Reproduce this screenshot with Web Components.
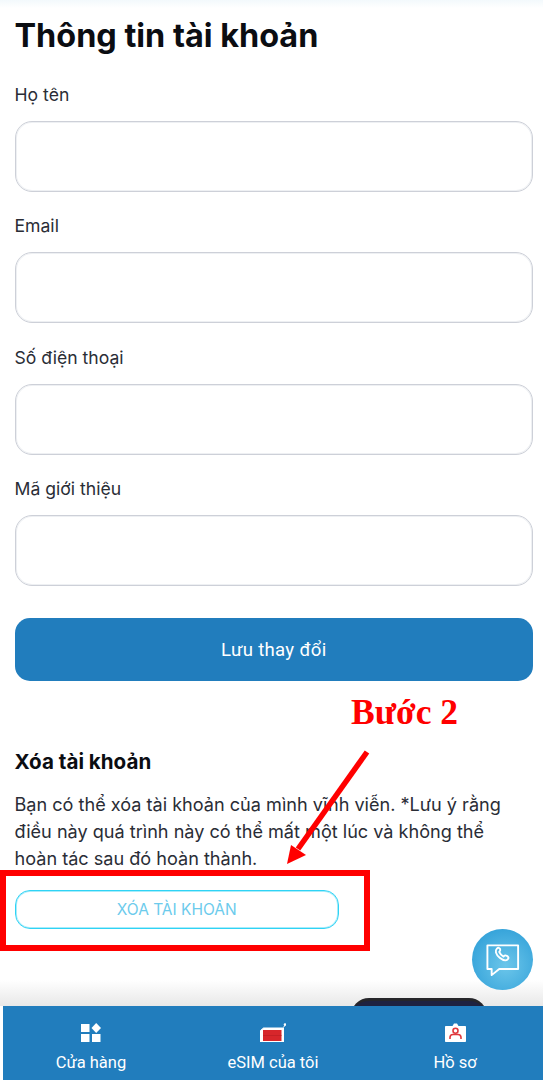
<!DOCTYPE html>
<html lang="vi">
<head>
<meta charset="utf-8">
<title>Thông tin tài khoản</title>
<style>
	html, body { margin: 0; padding: 0; background: #fff; }
	body { font-family: Inter, "Noto Sans", sans-serif; color: #14161c; width: 543px; height: 1080px; overflow: hidden; position: relative; }
</style>
</head>
<body>
<account-page>
	<page-title slot="title">Thông tin tài khoản</page-title>
	<form-field label="Họ tên"></form-field>
	<form-field label="Email"></form-field>
	<form-field label="Số điện thoại"></form-field>
	<form-field label="Mã giới thiệu"></form-field>
	<save-button>Lưu thay đổi</save-button>
	<delete-section heading="Xóa tài khoản" action="XÓA TÀI KHOẢN">Bạn có thể xóa tài khoản của mình vĩnh viễn. *Lưu ý rằng điều này quá trình này có thể mất một lúc và không thể hoàn tác sau đó hoàn thành.</delete-section>
</account-page>
<step-annotation>Bước 2</step-annotation>
<bottom-nav>
	<nav-item label="Cửa hàng"><svg viewBox="0 0 20 19" width="20" height="19"><rect x="0" y="1" width="8.500" height="8" fill="#fff"/><rect x="0" y="11" width="8.500" height="8" fill="#fff"/><rect x="11" y="11" width="8.500" height="8" fill="#fff"/><path d="M15.200 0 20 5 15.200 10 10.500 5Z" fill="#fff"/></svg></nav-item>
	<nav-item label="eSIM của tôi"><svg viewBox="0 0 26 19" width="26" height="19"><path d="M3.500 5H23.500V19H0.500V7.500Z" fill="#fff" stroke="#fff" stroke-linejoin="round"/><rect x="3" y="7" width="18.500" height="11" fill="#d7262b"/><path d="M3 12.500h18.500" stroke="#c01f25" stroke-width=".8"/><path d="M23.500 4.500 25 2" stroke="#fff" stroke-width="1"/><circle cx="25" cy="1.500" r="1.300" fill="#fff"/></svg></nav-item>
	<nav-item label="Hồ sơ"><svg viewBox="0 0 21 19" width="21" height="19"><path d="M0 4c0-.6.4-1 1-1h6.500L9 .5h3L13.500 3H20c.6 0 1 .4 1 1V18c0 .6-.4 1-1 1H1c-.6 0-1-.4-1-1Z" fill="#fff"/><circle cx="10.500" cy="7.800" r="2.500" fill="none" stroke="#e0383d" stroke-width="1.600"/><path d="M5 16v-1.500c0-2 1.500-3 3-3h5c1.500 0 3 1 3 3V16" fill="none" stroke="#e0383d" stroke-width="1.600"/></svg></nav-item>
</bottom-nav>
<chat-fab></chat-fab>

<script>
function shadow(host, html)
{
	host.attachShadow({ mode: "open" });
	host.shadowRoot.innerHTML = html;
}

class AccountPage extends HTMLElement
{
	constructor()
	{
		super();
		shadow(this, `
			<style>
				:host { display: block; }
				.top-tint { height: 8px; background: linear-gradient(#f3f9fc, #fff); }
				.content { display: flex; flex-direction: column; padding: 0 10px 0 14.500px; }
			</style>
			<div class="top-tint"></div>
			<div class="content"><slot name="title"></slot><slot></slot></div>
		`);
	}
}

class PageTitle extends HTMLElement
{
	constructor()
	{
		super();
		shadow(this, `
			<style>
				:host { display: block; height: 57px; font-size: 32.400px; font-weight: 700; line-height: 56px; color: #0b0d12; }
			</style>
			<slot></slot>
		`);
		this.slot = "title";
	}
}

class FormField extends HTMLElement
{
	constructor()
	{
		super();
		shadow(this, `
			<style>
				:host { display: block; height: 131.330px; }
				label { display: block; height: 56px; padding-top: 19px; box-sizing: border-box; font-size: 17.600px; line-height: 22px; color: #2a2d36; }
				.box { display: block; box-sizing: border-box; width: 100%; height: 71px; border: 1px solid #cdd0d8; box-shadow: inset 0 0 0 1px #eef0f3; border-radius: 17px; background: #fff; }
			</style>
			<label></label>
			<div class="box"></div>
		`);
		this.shadowRoot.querySelector("label").innerText = this.getAttribute("label");
	}
}

class SaveButton extends HTMLElement
{
	constructor()
	{
		super();
		shadow(this, `
			<style>
				:host { display: flex; align-items: center; justify-content: center; height: 63px; margin-top: 28px; border-radius: 15px; background: #217dbd; color: #fff; font: 400 18.600px/22px Roboto, sans-serif; letter-spacing: .3px; }
			</style>
			<slot></slot>
		`);
	}
}

class DeleteSection extends HTMLElement
{
	constructor()
	{
		super();
		shadow(this, `
			<style>
				:host { display: block; margin-top: 68px; }
				h2 { margin: 0; height: 26px; font-size: 20.600px; font-weight: 700; line-height: 26px; color: #0b0d12; }
				p { margin: 16px 0 0; font-size: 18.100px; line-height: 27px; color: #2a2d36; width: 510px; }
				.action { display: flex; align-items: center; justify-content: center; box-sizing: border-box; width: 324.500px; height: 39px; margin-top: 18px; border: 1px solid #2fd3f5; box-shadow: inset 0 0 0 1px #a8ecfa; border-radius: 15px; color: #6ccbec; font-size: 15.500px; }
			</style>
			<h2></h2>
			<p><slot></slot></p>
			<div class="action"></div>
		`);
		this.shadowRoot.querySelector("h2").innerText = this.getAttribute("heading");
		this.shadowRoot.querySelector(".action").innerText = this.getAttribute("action");
	}
}

class StepAnnotation extends HTMLElement
{
	constructor()
	{
		super();
		shadow(this, `
			<style>
				:host { display: block; position: absolute; inset: 0; pointer-events: none; }
				.step { position: absolute; left: 351px; top: 692px; font: 700 35.500px/40px "Liberation Serif", serif; color: #ff0000; white-space: nowrap; }
				.frame { position: absolute; left: 0; top: 870px; width: 370px; height: 81px; box-sizing: border-box; border: 6px solid #ff0000; }
				svg { position: absolute; left: 0; top: 0; }
			</style>
			<div class="step"><slot></slot></div>
			<div class="frame"></div>
			<svg width="543" height="1080"><path d="M367 752 298 849" stroke="#ff0000" stroke-width="5.500" fill="none"/><path d="M287 864 291 845 306 855Z" fill="#ff0000"/></svg>
		`);
	}
}

class ChatFab extends HTMLElement
{
	constructor()
	{
		super();
		shadow(this, `
			<style>
				:host { display: block; position: absolute; left: 472px; top: 929px; width: 61px; height: 61px; }
				.disc { width: 100%; height: 100%; border-radius: 50%; background: radial-gradient(circle at 55% 60%, #6cc6ea, #2f9fd8 85%); display: flex; align-items: center; justify-content: center; }
			</style>
			<div class="disc">
				<svg viewBox="0 0 36 36" width="34" height="36" fill="none" stroke="#fff" stroke-width="2" stroke-linejoin="round">
					<path d="M1.500 2.500h32.500v25H14L6 34v-6.500H1.500Z"/>
					<path d="M11.500 6c1.500-1.500 3-1 3.500.5.500 1.600-.3 2.300-1 3 .8 2 2.600 4 4.500 4.800.7-.7 1.700-1.500 3-1 2 .7 3 2.500 1.500 4-2 2-5 1-8.500-1.800C10 12 9.500 8 11.500 6Z"/>
				</svg>
			</div>
		`);
	}
}

class BottomNav extends HTMLElement
{
	constructor()
	{
		super();
		shadow(this, `
			<style>
				:host { display: block; position: absolute; left: 0; right: 0; bottom: 0; height: 100px; }
				.fade { position: absolute; left: 0; right: 0; top: 0; height: 26px; background: linear-gradient(#fff, #e8e8e8); }
				.phone { position: absolute; left: 351px; top: 18px; width: 136px; height: 20px; box-sizing: border-box; border-radius: 18px 18px 0 0; background: #1e2240; border-top: 3px solid #26262a; }
				.bar { position: absolute; left: 3px; right: 0; top: 26px; height: 74px; display: grid; grid-template-columns: repeat(3, 182px); justify-content: center; background: #217dbd; }
			</style>
			<div class="fade"></div>
			<div class="phone"></div>
			<div class="bar"><slot></slot></div>
		`);
	}
}

class NavItem extends HTMLElement
{
	constructor()
	{
		super();
		shadow(this, `
			<style>
				:host { display: flex; flex-direction: column; align-items: center; padding-top: 17px; box-sizing: border-box; color: #fff; font: 400 16.500px/20px Roboto, sans-serif; }
				.icon { height: 19px; display: flex; align-items: flex-end; }
				.text { margin-top: 11px; }
			</style>
			<div class="icon"><slot></slot></div>
			<div class="text"></div>
		`);
		this.shadowRoot.querySelector(".text").innerText = this.getAttribute("label");
	}
}

customElements.define("account-page", AccountPage);
customElements.define("page-title", PageTitle);
customElements.define("form-field", FormField);
customElements.define("save-button", SaveButton);
customElements.define("delete-section", DeleteSection);
customElements.define("step-annotation", StepAnnotation);
customElements.define("chat-fab", ChatFab);
customElements.define("bottom-nav", BottomNav);
customElements.define("nav-item", NavItem);
</script>
</body>
</html>
